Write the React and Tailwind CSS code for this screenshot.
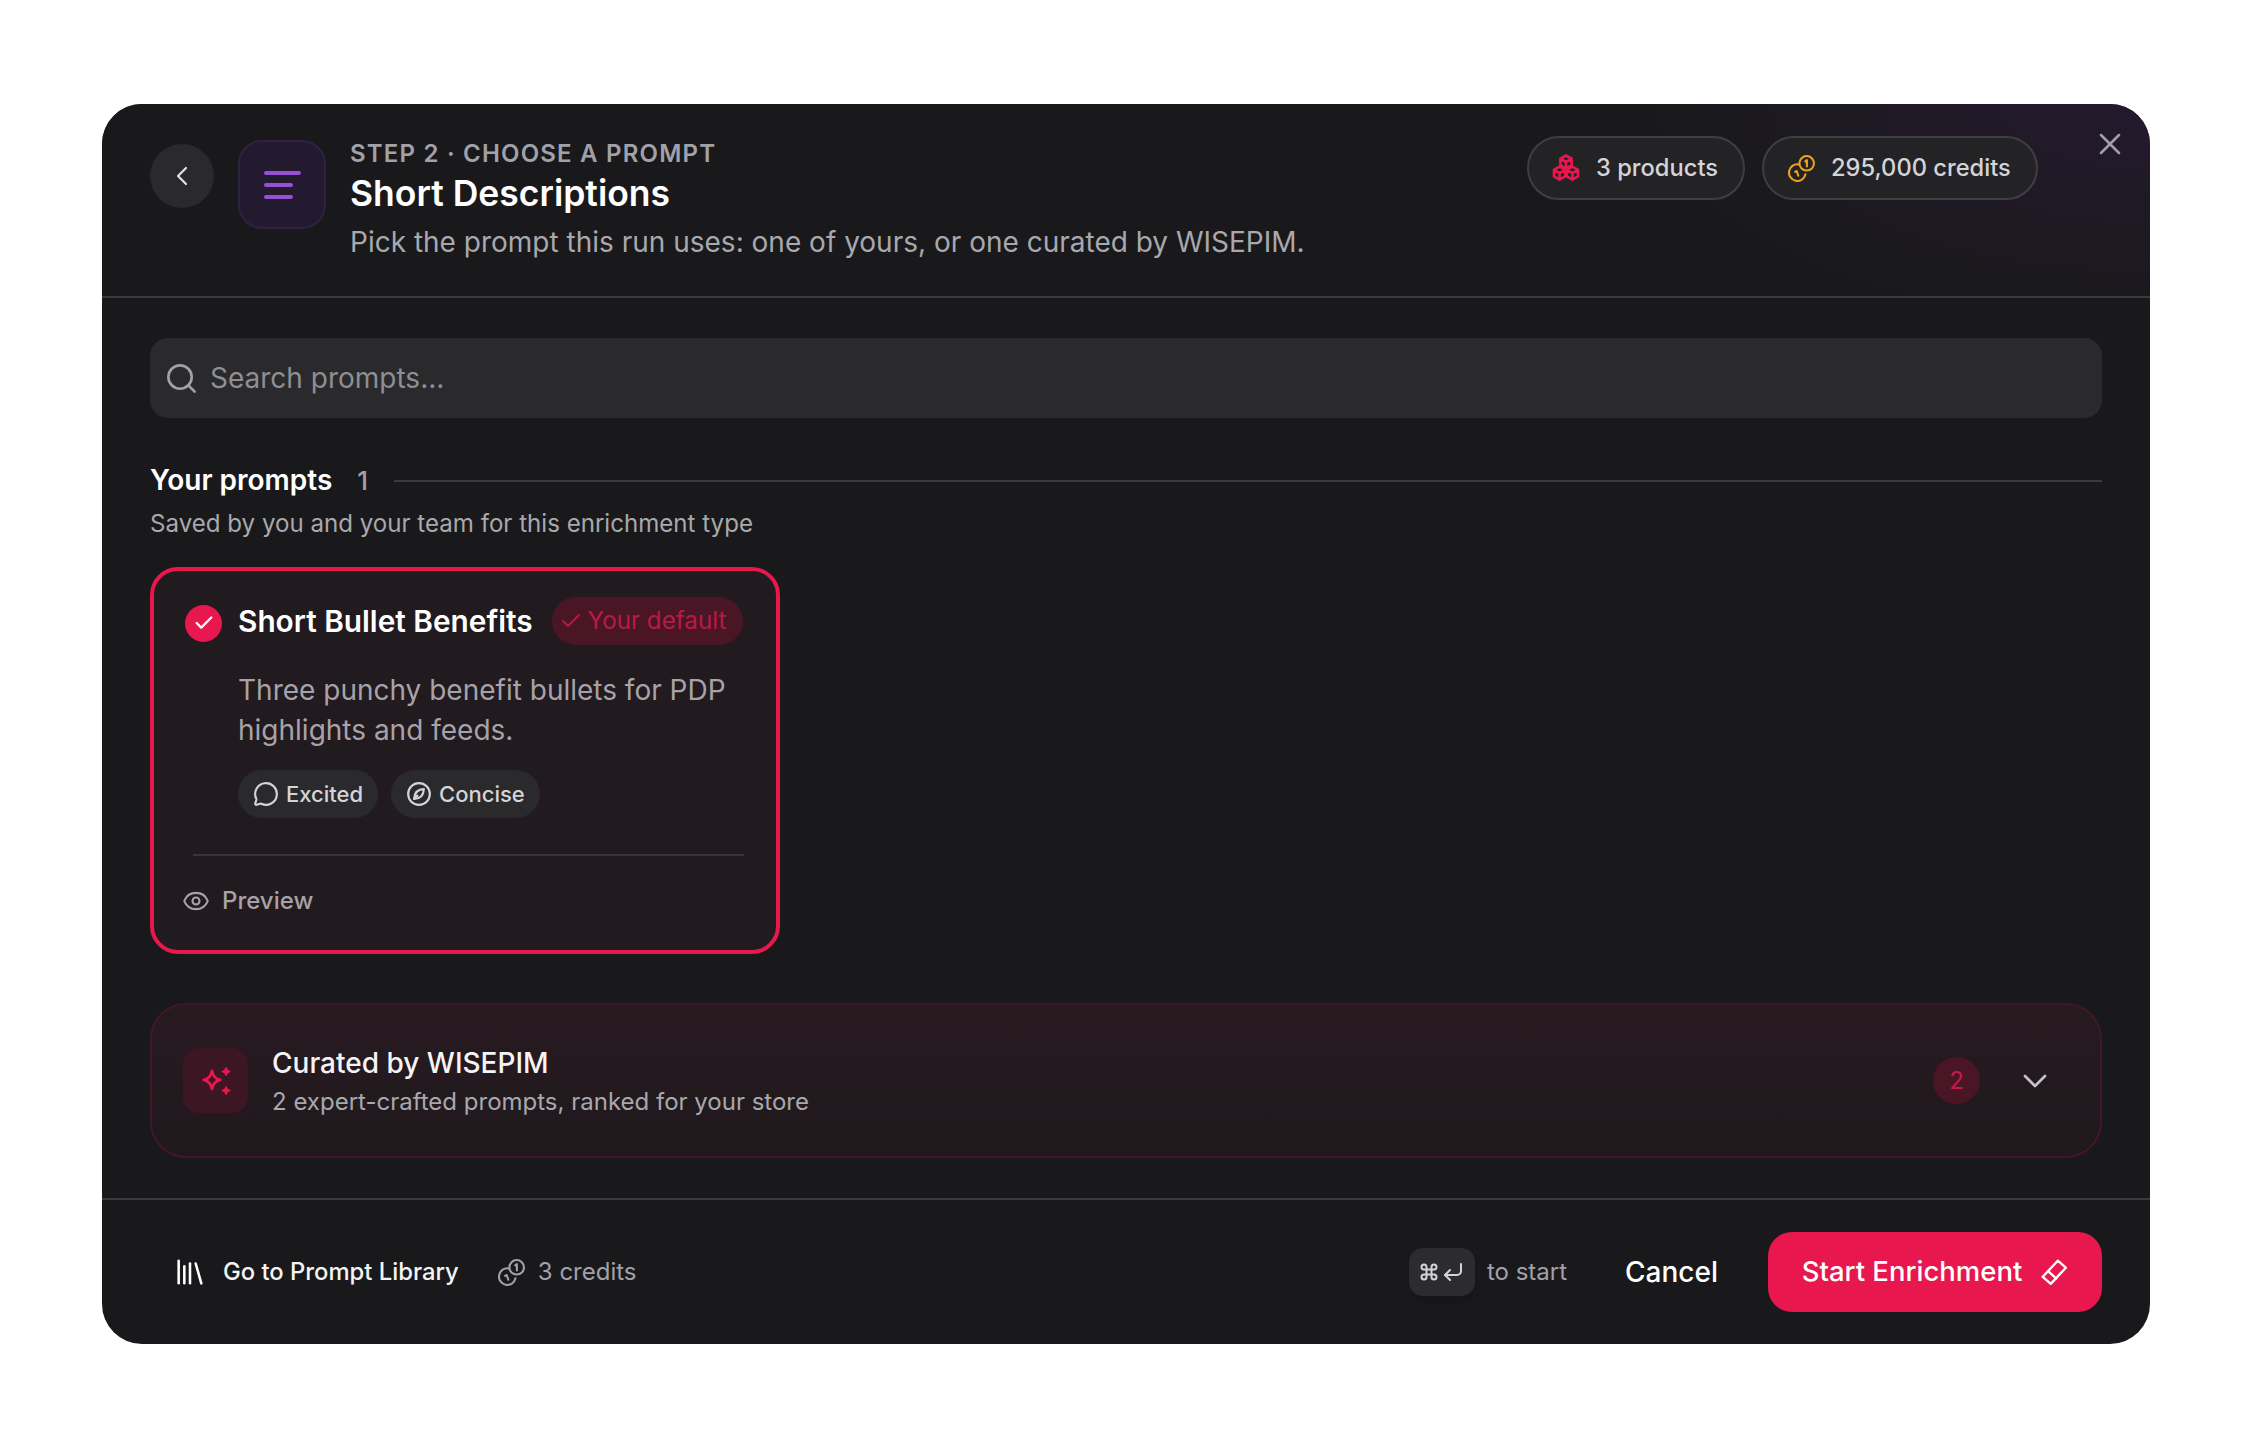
import { ChevronLeft, ChevronDown, X, Search, Check, Eye, Library, MessageCircle, Command, CornerDownLeft } from 'lucide-react'

function cube(cx, cy) {
  return `M${cx} ${cy - 6.5}l5.65 3.25v6.5l-5.65 3.25-5.65-3.25v-6.5Z M${cx - 5.65} ${cy - 3.25}L${cx} ${cy}l5.65-3.25 M${cx} ${cy}v6.5`
}

function BoxesIcon({ className }) {
  return (
    <svg viewBox="0 0 28 28" fill="none" stroke="currentColor" strokeWidth="2.6" strokeLinejoin="round" className={className}>
      <path d={cube(14, 8)} />
      <path d={cube(7.6, 19.2)} />
      <path d={cube(20.4, 19.2)} />
    </svg>
  )
}

function CoinsIcon({ className }) {
  return (
    <svg viewBox="0 0 26 26" fill="none" stroke="currentColor" strokeWidth="2" strokeLinecap="round" strokeLinejoin="round" className={className}>
      <circle cx="18" cy="8" r="7" />
      <path d="M16.6 6.2 18.2 5v6" />
      <path d="M10.5 9.1A8 8 0 1 0 16.8 18.6" />
      <path d="M6.8 16.2 8.4 15.4l1.5 4.6" />
    </svg>
  )
}

function LeafCircle({ className }) {
  return (
    <svg viewBox="0 0 24 24" fill="none" stroke="currentColor" strokeWidth="2" strokeLinecap="round" strokeLinejoin="round" className={className}>
      <circle cx="12" cy="12" r="10" />
      <path d="M16.5 7.5c-4.8 0-8.5 1.7-9 9 4.8 0 8.5-1.7 9-9Z" />
      <path d="M7.5 16.5 10.5 13.5" />
    </svg>
  )
}

function SparkIcon({ className }) {
  return (
    <svg viewBox="0 0 32 32" fill="none" stroke="currentColor" strokeWidth="2.6" strokeLinejoin="round" className={className}>
      <path d="M12.2 6.5c.9 5 3 7.4 7.8 8.500-4.800 1.100-6.900 3.500-7.800 8.500-.9-5-3-7.400-7.800-8.500 4.800-1.100 6.900-3.500 7.800-8.500Z" />
      <path d="M25.5 3.500c.4 2 1.400 3 3.500 3.500-2.100.5-3.100 1.500-3.500 3.500-.4-2-1.400-3-3.500-3.500 2.100-.5 3.100-1.500 3.500-3.500Z" fill="currentColor" strokeWidth="1.4" />
      <path d="M25.500 21.500c.4 2 1.400 3 3.500 3.500-2.100.5-3.100 1.500-3.500 3.500-.4-2-1.400-3-3.500-3.500 2.100-.5 3.100-1.500 3.500-3.500Z" fill="currentColor" strokeWidth="1.4" />
    </svg>
  )
}

function EraserIcon({ className }) {
  return (
    <svg viewBox="0 0 26 26" fill="none" stroke="currentColor" strokeWidth="2.2" strokeLinejoin="round" strokeLinecap="round" className={className}>
      <path d="M16.5 2.5 24 9 10 24l-7.5-6.500Z" />
      <path d="M7.5 12.2 15 19" />
    </svg>
  )
}

function Chip({ icon, label }) {
  return (
    <span className="flex items-center gap-[7px] h-[48px] px-[15px] rounded-full bg-[#2a2a2d] text-[22px] font-medium text-[#d4d4d8]">
      {icon}
      {label}
    </span>
  )
}

export default function App() {
  return (
    <div className="min-h-[1448px] bg-white pt-[104px] pl-[102px] font-[Inter,sans-serif]">
      <div className="w-[2048px] h-[1240px] flex flex-col rounded-[40px] overflow-hidden bg-[#19191b]">
        {/* Header */}
        <div className="h-[194px] shrink-0 flex items-start pl-[48px] pr-[22px] border-b-2 border-[#3a3a3d] bg-[radial-gradient(ellipse_500px_220px_at_top_right,#241a2e_0%,#19191b_100%)]">
          <button className="mt-[40px] w-[64px] h-[64px] rounded-full bg-[#2a2a2d] flex items-center justify-center text-[#e4e4e7]">
            <ChevronLeft size={32} strokeWidth={1.6} />
          </button>
          <div className="mt-[36px] ml-[24px] w-[88px] h-[89px] rounded-[24px] bg-[#231a30] border-2 border-[#2f2140] flex flex-col justify-center gap-[8px] pl-[24px]">
            <span className="w-[37px] h-[4px] rounded-full bg-[#9650d4]" />
            <span className="w-[29px] h-[4px] rounded-full bg-[#9650d4]" />
            <span className="w-[29px] h-[4px] rounded-full bg-[#9650d4]" />
          </div>
          <div className="ml-[24px] mt-[34px] flex-1">
            <p className="text-[24px] leading-[32px] font-semibold tracking-[1.2px] text-[#a1a1aa]">STEP 2 · CHOOSE A PROMPT</p>
            <h1 className="text-[35.5px] leading-[46px] mt-[1px] font-semibold text-white">Short Descriptions</h1>
            <p className="text-[28px] leading-[40px] mt-[5px] text-[#a8a8ad]">Pick the prompt this run uses: one of yours, or one curated by WISEPIM.</p>
          </div>
          <div className="mt-[32px] flex gap-[17px]">
            <span className="flex items-center gap-[16px] w-[218px] h-[64px] pl-[23px] rounded-full bg-[#232326] border-2 border-[#3f3f42] text-[23.7px] font-medium text-[#d4d4d8]">
              <BoxesIcon className="w-[28px] h-[28px] text-[#e8174d]" />
              3 products
            </span>
            <span className="flex items-center gap-[16px] w-[276px] h-[64px] pl-[24px] rounded-full bg-[#232326] border-2 border-[#3f3f42] text-[23.7px] font-medium text-[#d4d4d8]">
              <CoinsIcon className="w-[27px] h-[27px] text-[#eaa31e]" />
              295,000 credits
            </span>
          </div>
          <button className="mt-[22px] ml-[54px] text-[#a1a1aa]">
            <X size={36} strokeWidth={1.7} />
          </button>
        </div>

        {/* Body */}
        <div className="flex-1 pl-[48px] pr-[48px] pt-[40px]">
          <div className="h-[80px] rounded-[18px] bg-[#2a2a2d] flex items-center gap-[11px] pl-[14px] text-[#8e8e93]">
            <Search size={35} strokeWidth={1.8} className="text-[#a1a1aa]" />
            <span className="text-[28px]">Search prompts...</span>
          </div>

          <div className="mt-[42px] flex items-center">
            <h2 className="text-[28px] leading-[40px] font-semibold text-white">Your prompts</h2>
            <span className="ml-[25px] text-[26px] font-medium text-[#a1a1aa]">1</span>
            <span className="ml-[26px] mt-[1px] flex-1 h-[2px] bg-[#3a3a3d]" />
          </div>
          <p className="mt-[7px] text-[24.1px] leading-[34px] text-[#a8a8ad]">Saved by you and your team for this enrichment type</p>

          <div className="mt-[26px] w-[630px] h-[387px] rounded-[28px] border-[4px] border-[#e8174d] bg-[#211a1f] pt-[26px] pl-[31px] pr-[32px]">
            <div className="flex items-center h-[48px]">
              <span className="w-[37px] h-[37px] mt-[4px] rounded-full bg-[#e8174d] flex items-center justify-center text-white shrink-0">
                <Check size={22} strokeWidth={2.5} />
              </span>
              <span className="ml-[16px] text-[29.8px] font-semibold text-white whitespace-nowrap">Short Bullet Benefits</span>
              <span className="ml-[19px] h-[48px] flex items-center gap-[5px] pl-[7px] pr-[17px] rounded-full bg-[#4a1626] text-[24.2px] text-[#b81a47] whitespace-nowrap">
                <Check size={24} strokeWidth={1.8} />
                Your default
              </span>
            </div>
            <p className="mt-[25px] ml-[53px] text-[28px] leading-[40px] text-[#a8a2a8]">Three punchy benefit bullets for PDP highlights and feeds.</p>
            <div className="mt-[20px] ml-[53px] flex gap-[13px]">
              <Chip icon={<MessageCircle size={26} strokeWidth={2} />} label="Excited" />
              <Chip icon={<LeafCircle className="w-[26px] h-[26px]" />} label="Concise" />
            </div>
            <div className="mt-[36px] ml-[8px] h-[2px] bg-[#3a343a]" />
            <div className="mt-[28px] -ml-[3px] flex items-center gap-[12px] text-[#a8a2a8]">
              <Eye size={28} strokeWidth={1.8} />
              <span className="text-[24px] font-medium leading-[34px]">Preview</span>
            </div>
          </div>

          <div className="mt-[49px] h-[155px] rounded-[36px] border-2 border-[#43162a] bg-gradient-to-b from-[#271a20] to-[#1f191c] flex items-center pl-[31px] pr-[45px]">
            <div className="w-[65px] h-[65px] rounded-[16px] bg-[#3c1622] flex items-center justify-center text-[#e8174d]">
              <SparkIcon className="w-[34px] h-[34px]" />
            </div>
            <div className="ml-[24px] pt-[2px] flex-1">
              <p className="text-[28px] leading-[38px] font-medium text-[#f4f4f5]">Curated by WISEPIM</p>
              <p className="mt-[2px] text-[24px] leading-[36px] text-[#a8a8ad]">2 expert-crafted prompts, ranked for your store</p>
            </div>
            <span className="w-[47px] h-[47px] rounded-full bg-[#4a1626] flex items-center justify-center text-[24px] text-[#c81a4a]">2</span>
            <ChevronDown size={40} strokeWidth={1.6} className="ml-[35px] text-[#c4c4c8]" />
          </div>
        </div>

        {/* Footer */}
        <div className="h-[146px] shrink-0 border-t-2 border-[#3a3a3d] flex items-center pl-[71px] pr-[48px]">
          <Library size={34} strokeWidth={1.8} className="text-white" />
          <span className="ml-[16px] text-[23.8px] font-medium text-[#f4f4f5]">Go to Prompt Library</span>
          <CoinsIcon className="ml-[39px] w-[27px] h-[27px] text-[#a1a1aa]" />
          <span className="ml-[13px] text-[24px] text-[#a1a1aa]">3 credits</span>
          <div className="ml-auto w-[66px] h-[48px] rounded-[14px] bg-[#2c2c2f] shadow-lg flex items-center justify-center gap-[2px] text-[#d4d4d8]">
            <Command size={20} strokeWidth={2.4} />
            <CornerDownLeft size={24} strokeWidth={2} />
          </div>
          <span className="ml-[12px] text-[24px] text-[#a1a1aa]">to start</span>
          <span className="ml-[58px] text-[28px] font-medium text-white">Cancel</span>
          <button className="ml-[50px] w-[334px] h-[80px] rounded-[24px] bg-[#e8174d] flex items-center justify-center gap-[18px] text-[27.5px] font-medium text-white">
            Start Enrichment
            <EraserIcon className="w-[28px] h-[28px]" />
          </button>
        </div>
      </div>
    </div>
  )
}
